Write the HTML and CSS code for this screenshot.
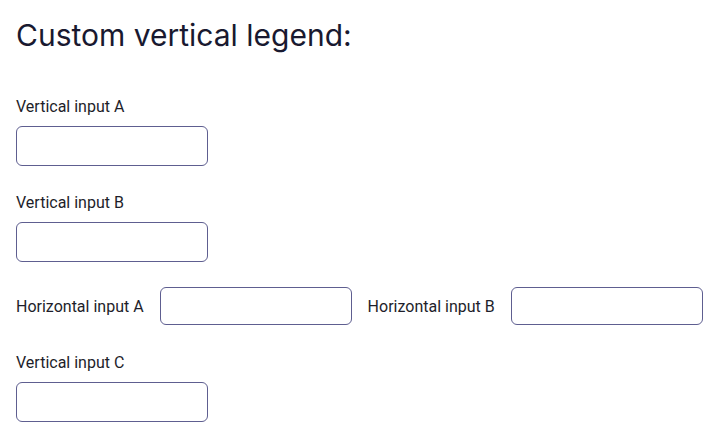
FILE: index.html
```html
<!DOCTYPE html>
<html>
<head>
<meta charset="utf-8">
<link rel="stylesheet" href="styles.css">
</head>
<body>
<h1 class="title">Custom vertical legend:</h1>
<form class="form">
  <div class="field">
    <label class="label">Vertical input A</label>
    <input class="input" type="text">
  </div>
  <div class="field">
    <label class="label">Vertical input B</label>
    <input class="input" type="text">
  </div>
  <div class="row">
    <div class="hfield">
      <label class="label">Horizontal input A</label>
      <input class="input input-h" type="text">
    </div>
    <div class="hfield">
      <label class="label">Horizontal input B</label>
      <input class="input input-h" type="text">
    </div>
  </div>
  <div class="field">
    <label class="label">Vertical input C</label>
    <input class="input" type="text">
  </div>
</form>
</body>
</html>
```

FILE: styles.css
```css
html, body {
  margin: 0;
  padding: 0;
  background: #ffffff;
}
body {
  padding: 16px;
  font-family: Roboto, "Liberation Sans", sans-serif;
  color: #1e1e2a;
}
.title {
  margin: 0;
  font-family: Inter, "Noto Sans", sans-serif;
  font-weight: 400;
  font-size: 30px;
  line-height: 38px;
  color: #191930;
}
.form {
  margin-top: 42px;
  display: flex;
  flex-direction: column;
  gap: 26px;
}
.field {
  display: flex;
  flex-direction: column;
  gap: 9px;
}
.label {
  font-size: 16px;
  line-height: 20px;
  padding-top: 1px;
}
.input {
  box-sizing: border-box;
  width: 192px;
  height: 40px;
  margin: 0;
  border: 1px solid #5e5e90;
  border-radius: 6px;
  background: #fff;
}
.input-h {
  height: 38px;
}
.row {
  display: flex;
  gap: 16px;
  height: 40px;
  margin-top: -2px;
}
.hfield {
  display: flex;
  align-items: center;
  gap: 16px;
}
```
